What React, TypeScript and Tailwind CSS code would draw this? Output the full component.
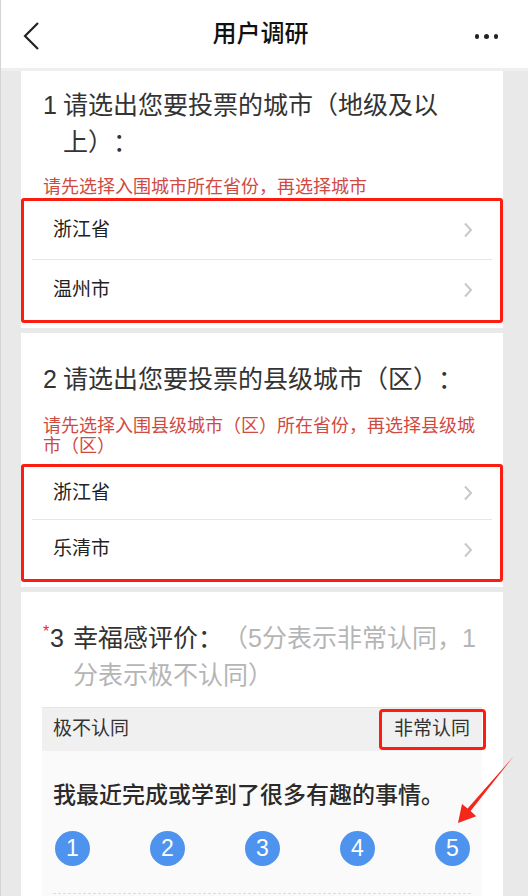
import React from 'react'

const Chevron = () => (
    <svg width="10" height="16" viewBox="0 0 10 16" className="shrink-0">
        <path d="M2 1.5 L8 8 L2 14.5" fill="none" stroke="#c8c8c8" strokeWidth="2"/>
    </svg>
)

const Row = ({label, h}: {label: string, h: string}) => (
    <div className={`flex items-center justify-between pl-[21px] pr-[19px] ${h}`}>
        <span className="text-[19px] text-[#222]">{label}</span>
        <Chevron/>
    </div>
)

const App = () => {
    return (
        <div
            className="relative w-[528px] h-[896px] overflow-hidden bg-[#e9e9e9] border-l border-[#d4d4d4] [text-spacing-trim:space-all] font-[family-name:'Liberation_Sans','Noto_Sans_CJK_SC',sans-serif]">
            {/* header */}
            <div className="relative h-[71px] bg-white border-b-[3px] border-[#efefef] flex items-center justify-center">
                <svg width="20" height="30" viewBox="0 0 20 30" className="absolute left-[21px] top-[21px]">
                    <path d="M16 2 L3 15 L16 28" fill="none" stroke="#222" strokeWidth="2.2"/>
                </svg>
                <span className="text-[24px] font-medium text-[#111] pr-[8px]">用户调研</span>
                <div className="absolute right-[30px] top-[34px] flex gap-[5px]">
                    <span className="w-[4.5px] h-[4.5px] rounded-full bg-[#222]"/>
                    <span className="w-[4.5px] h-[4.5px] rounded-full bg-[#222]"/>
                    <span className="w-[4.5px] h-[4.5px] rounded-full bg-[#222]"/>
                </div>
            </div>

            <div className="pl-[20px] pr-[25px] flex flex-col gap-[5px]">
                {/* question 1 */}
                <div className="bg-white pt-[16px] px-[22px] pb-[5px]">
                    <div className="flex text-[25px] leading-[37px] text-[#333]">
                        <span className="w-[20px] shrink-0">1</span>
                        <span className="flex-1">请选出您要投票的城市（地级及以上）：</span>
                    </div>
                    <p className="mt-[16px] text-[18px] leading-[20px] text-[#cf4a3f]">请先选择入围城市所在省份，再选择城市</p>
                    <div className="-mx-[22px] mt-[1px] border-[3px] border-[#fb1d0f] rounded-[3px]">
                        <div className="mx-[8px]">
                            <Row label="浙江省" h="h-[58px]"/>
                            <div className="h-px bg-[#e6e6e6]"/>
                            <Row label="温州市" h="h-[60px]"/>
                        </div>
                    </div>
                </div>

                {/* question 2 */}
                <div className="bg-white pt-[28px] px-[22px] pb-[5px]">
                    <div className="flex text-[25px] leading-[37px] text-[#333]">
                        <span className="w-[20px] shrink-0">2</span>
                        <span className="flex-1">请选出您要投票的县级城市（区）：</span>
                    </div>
                    <p className="mt-[18px] text-[18px] leading-[20px] text-[#cf4a3f]">请先选择入围县级城市（区）所在省份，再选择县级城市（区）</p>
                    <div className="-mx-[22px] mt-[8px] border-[3px] border-[#fb1d0f] rounded-[3px]">
                        <div className="mx-[8px]">
                            <Row label="浙江省" h="h-[52px]"/>
                            <div className="h-px bg-[#e6e6e6]"/>
                            <Row label="乐清市" h="h-[59px]"/>
                        </div>
                    </div>
                </div>

                {/* question 3 */}
                <div className="bg-white pt-[28px] px-[21px] pb-[20px]">
                    <div className="flex text-[25px] leading-[37px] text-[#333]">
                        <span className="w-[31px] shrink-0 flex">
                            <span className="w-[8px] pl-[1px] text-[16px] text-[#f0291c] leading-[24px]">*</span>
                            <span>3</span>
                        </span>
                        <span className="flex-1">幸福感评价：<span className="text-[#b5b5b5]">（5分表示非常认同，1分表示极不认同）</span></span>
                    </div>
                    <div className="mt-[13px] h-px bg-[#e6e6e6]"/>
                    <div className="h-[43px] bg-[#f0f0f0] flex items-center justify-between pl-[11px]">
                        <span className="text-[19px] text-[#333]">极不认同</span>
                        <span
                            className="-mr-[4px] h-[41px] flex items-center border-[3px] border-[#fb1d0f] rounded-[4px] pl-[12px] pr-[13px] text-[19px] text-[#333]">非常认同</span>
                    </div>
                    <div className="bg-[#fafafa] pt-[29px] pb-[40px]">
                        <p className="pl-[11px] text-[23px] leading-[30px] font-medium text-[#2a2a2a]">我最近完成或学到了很多有趣的事情。</p>
                        <div className="mt-[21px] pl-[13px] flex gap-[60px]">
                            {[1, 2, 3, 4, 5].map((n) => (
                                <span key={n}
                                      className="w-[35px] h-[35px] rounded-full bg-[#4e94ee] text-white text-[23px] flex items-center justify-center">{n}</span>
                            ))}
                        </div>
                        <div className="mt-[27px] mx-[11px] border-t border-dashed border-[#dcdcdc]"/>
                    </div>
                </div>
            </div>

            {/* annotation arrow */}
            <svg className="absolute left-0 top-0 pointer-events-none" width="528" height="896" viewBox="0 0 528 896">
                <polygon points="512.5,756.5 469.6,811 475.2,816.2 457,823 461,804 466.6,808.4" fill="#f5261a"/>
            </svg>
        </div>
    )
}

export default App
